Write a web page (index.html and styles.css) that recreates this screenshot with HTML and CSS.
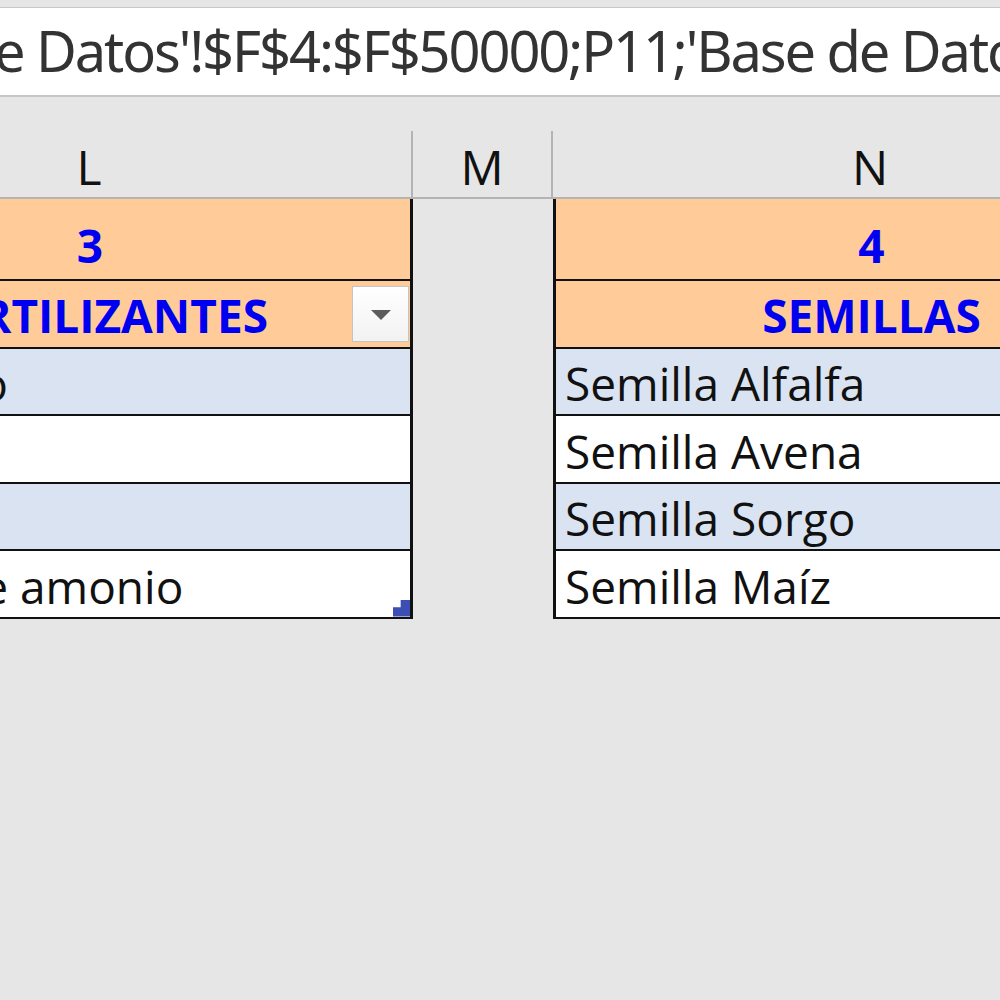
FILE: index.html
```html
<!DOCTYPE html>
<html lang="es">
<head>
<title>Insumos - Hoja de cálculo</title>
<meta charset="UTF-8">
<meta name="viewport" content="width=device-width, initial-scale=1">
<link rel="stylesheet" href="styles.css">
</head>

<body>
    <div class="formulabar">
        <div class="formula">e Datos'!$F$4:$F$50000;P11;'Base de Datos'!$G$4:$G$50000)</div>
    </div>

    <div class="sheet">
        <div class="colheads">
            <div class="colhead">L</div>
            <div class="colhead">M</div>
            <div class="colhead">N</div>
        </div>

        <div class="columns">
            <div class="tbl tbl-left">
                <div class="cell num">3</div>
                <div class="cell title">
                    <span>FERTILIZANTES</span>
                    <span class="filter"><span class="arrow"></span></span>
                </div>
                <div class="cell band">Nitrógeno</div>
                <div class="cell">Urea</div>
                <div class="cell band">Potasio</div>
                <div class="cell last">Sulfato de amonio<span class="handle"></span></div>
            </div>

            <div class="empty"></div>

            <div class="tbl tbl-right">
                <div class="cell num">4</div>
                <div class="cell title">SEMILLAS</div>
                <div class="cell band">Semilla Alfalfa</div>
                <div class="cell">Semilla Avena</div>
                <div class="cell band">Semilla Sorgo</div>
                <div class="cell">Semilla Maíz</div>
            </div>
        </div>
    </div>
</body>
</html>
```

FILE: styles.css
```css
body {
  margin: 0;
  background-color: #e6e6e6;
  font-family: "Open Sans", "Noto Sans", sans-serif;
  overflow: hidden;
}

/* formula bar across the top */
.formulabar {
  margin-top: 7px;
  height: 90px;
  box-sizing: border-box;
  background-color: #fff;
  border-top: 1px solid #c8c8c8;
  border-bottom: 2px solid #c6c6c6;
  padding-top: 14px;
  overflow: hidden;
}
.formula {
  margin-left: -6px;
  font-family: "Noto Sans", sans-serif;
  font-size: 56px;
  letter-spacing: -2.1px;
  line-height: 1;
  color: #333;
  white-space: nowrap;
}

/* sheet: column L starts off screen on the left */
.sheet {
  margin-left: -233px;
}
.colheads,
.columns {
  display: grid;
  grid-template-columns: 646px 140px 634px;
}

/* column letters */
.colhead {
  height: 102px;
  box-sizing: border-box;
  display: flex;
  align-items: flex-end;
  justify-content: center;
  padding-bottom: 6px;
  font-size: 48px;
  line-height: 1;
  color: #111;
  border-bottom: 2px solid #b8b8b8;
  border-right: 2px solid #b8b8b8;
  border-image: linear-gradient(to bottom, transparent 34%, #b4b4b4 34%) 1;
}
.colhead:last-child {
  border-right: none;
}

/* tables */
.tbl {
  display: flex;
  flex-direction: column;
}
.tbl-left .cell {
  border-right: 3px solid #111;
}
.tbl-right .cell {
  border-left: 3px solid #111;
}
.cell {
  height: 67.5px;
  box-sizing: border-box;
  display: flex;
  align-items: flex-end;
  padding: 0 10px 8px 25px;
  background-color: #fff;
  border-bottom: 2px solid #111;
  font-size: 46px;
  line-height: 1;
  color: #111;
  white-space: nowrap;
  overflow: hidden;
}
.tbl-right .cell {
  padding-left: 9px;
}
.cell.band {
  background-color: #dae3f1;
}
.cell.num,
.cell.title {
  background-color: #ffcc99;
  color: #0000f0;
  font-weight: bold;
  justify-content: center;
}
.cell.num {
  height: 82px;
  padding-bottom: 11px;
}
.cell.title {
  padding-bottom: 9px;
}
.tbl-left .cell.num {
  padding-left: 13px;
}
.tbl-right .cell.num,
.tbl-right .cell.title {
  padding-left: 10px;
}
.tbl-left .cell.title {
  justify-content: flex-end;
  align-items: center;
  gap: 84px;
  padding: 0 1px 0 0;
}
.tbl-left .cell.title span:first-child {
  margin-top: 2px;
}

/* autofilter button */
.filter {
  width: 57px;
  height: 56px;
  box-sizing: border-box;
  border: 1px solid #c4c4c4;
  background: linear-gradient(#ffffff, #f2f2f2);
  display: flex;
  align-items: center;
  justify-content: center;
}
.arrow {
  width: 0;
  height: 0;
  border-left: 10px solid transparent;
  border-right: 10px solid transparent;
  border-top: 10px solid #5c5c5c;
}

/* table resize handle in the bottom corner */
.cell.last {
  position: relative;
}
.handle {
  position: absolute;
  right: 0;
  bottom: 0;
  width: 17px;
  height: 17px;
  background-color: #3c4db3;
  clip-path: polygon(0 45%, 45% 45%, 45% 0, 100% 0, 100% 100%, 0 100%);
}
```
